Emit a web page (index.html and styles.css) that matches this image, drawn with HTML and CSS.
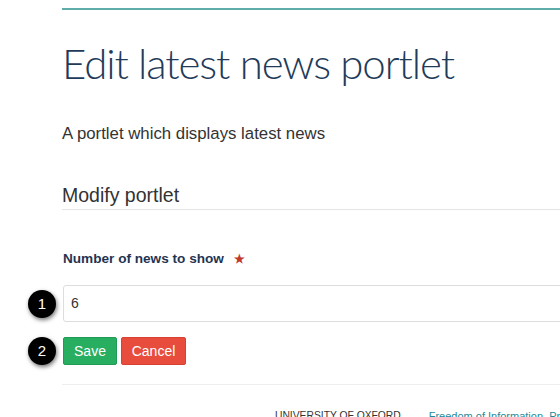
FILE: index.html
```html
<!DOCTYPE html>
<html>
<head>
<meta charset="utf-8">
<link rel="stylesheet" href="styles.css">
</head>
<body>
<div class="page">
  <div class="topline"></div>
  <h1 class="title">Edit latest news portlet</h1>
  <p class="desc">A portlet which displays latest news</p>
  <h2 class="section">Modify portlet</h2>
  <form class="form">
    <label class="label">Number of news to show <span class="star">&#9733;</span></label>
    <div class="field-row">
      <span class="badge">1</span>
      <div class="input">6</div>
    </div>
    <div class="btn-row">
      <span class="badge">2</span>
      <button type="button" class="btn save">Save</button>
      <button type="button" class="btn cancel">Cancel</button>
    </div>
  </form>
  <div class="footer">
    <span class="uni">UNIVERSITY OF OXFORD</span>
    <a class="foi">Freedom of Information, Privacy</a>
  </div>
</div>
</body>
</html>
```
FILE: styles.css
```css
html, body {
  margin: 0;
  padding: 0;
  background: #fff;
  overflow: hidden;
}
.page {
  margin-left: 62px;
  width: 700px;
  padding-top: 8px;
  font-family: "Liberation Sans", Arial, sans-serif;
  color: #333;
}
.topline {
  height: 2px;
  background: #5fadab;
}
.title {
  margin: 27px 0 0 0;
  font-family: Lato, sans-serif;
  font-weight: 300;
  font-size: 42px;
  line-height: 52px;
  color: #1f3b5a;
  letter-spacing: -1.1px;
}
.desc {
  margin: 35px 0 0 0;
  font-size: 16.8px;
  line-height: 20px;
  color: #333;
}
.section {
  margin: 39px 0 0 0;
  font-weight: normal;
  font-size: 19.5px;
  line-height: 24px;
  color: #333;
  padding-bottom: 2px;
  border-bottom: 1px solid #e5e5e5;
}
.form {
  margin: 0;
  padding-top: 40px;
  padding-bottom: 19px;
  border-bottom: 1px solid #eee;
}
.label {
  display: block;
  margin-left: 1px;
  font-weight: bold;
  font-size: 13.6px;
  line-height: 18px;
  color: #1f3452;
}
.star {
  color: #c0392b;
  font-size: 12px;
  margin-left: 6px;
}
.field-row {
  position: relative;
  margin-top: 17px;
  margin-left: 1px;
}
.input {
  height: 35px;
  border: 1px solid #ddd;
  border-radius: 3px;
  padding: 0 7px;
  font-size: 14px;
  line-height: 35px;
  color: #333;
}
.btn-row {
  position: relative;
  display: flex;
  gap: 4px;
  margin-top: 15px;
  margin-left: 1px;
}
.badge {
  position: absolute;
  left: -35px;
  top: 50%;
  margin-top: -14px;
  width: 28px;
  height: 28px;
  border-radius: 50%;
  background: #000;
  color: #fff;
  font-size: 15px;
  line-height: 28px;
  text-align: center;
  box-shadow: 1px 2px 4px rgba(0,0,0,0.55);
}
.btn {
  height: 28px;
  border-radius: 2px;
  border: 1px solid transparent;
  color: #fff;
  font-family: "Liberation Sans", Arial, sans-serif;
  font-size: 14px;
  padding: 0;
}
.save {
  background: #27ae60;
  border-color: #229955;
  width: 54px;
}
.cancel {
  background: #e74c3c;
  border-color: #d84234;
  width: 65px;
}
.footer {
  display: flex;
  gap: 28px;
  margin-left: 213px;
  margin-top: 24px;
  font-size: 10.3px;
  line-height: 14px;
  white-space: nowrap;
}
.uni {
  color: #333;
}
.foi {
  color: #1f8a9a;
  font-size: 11px;
}
```
